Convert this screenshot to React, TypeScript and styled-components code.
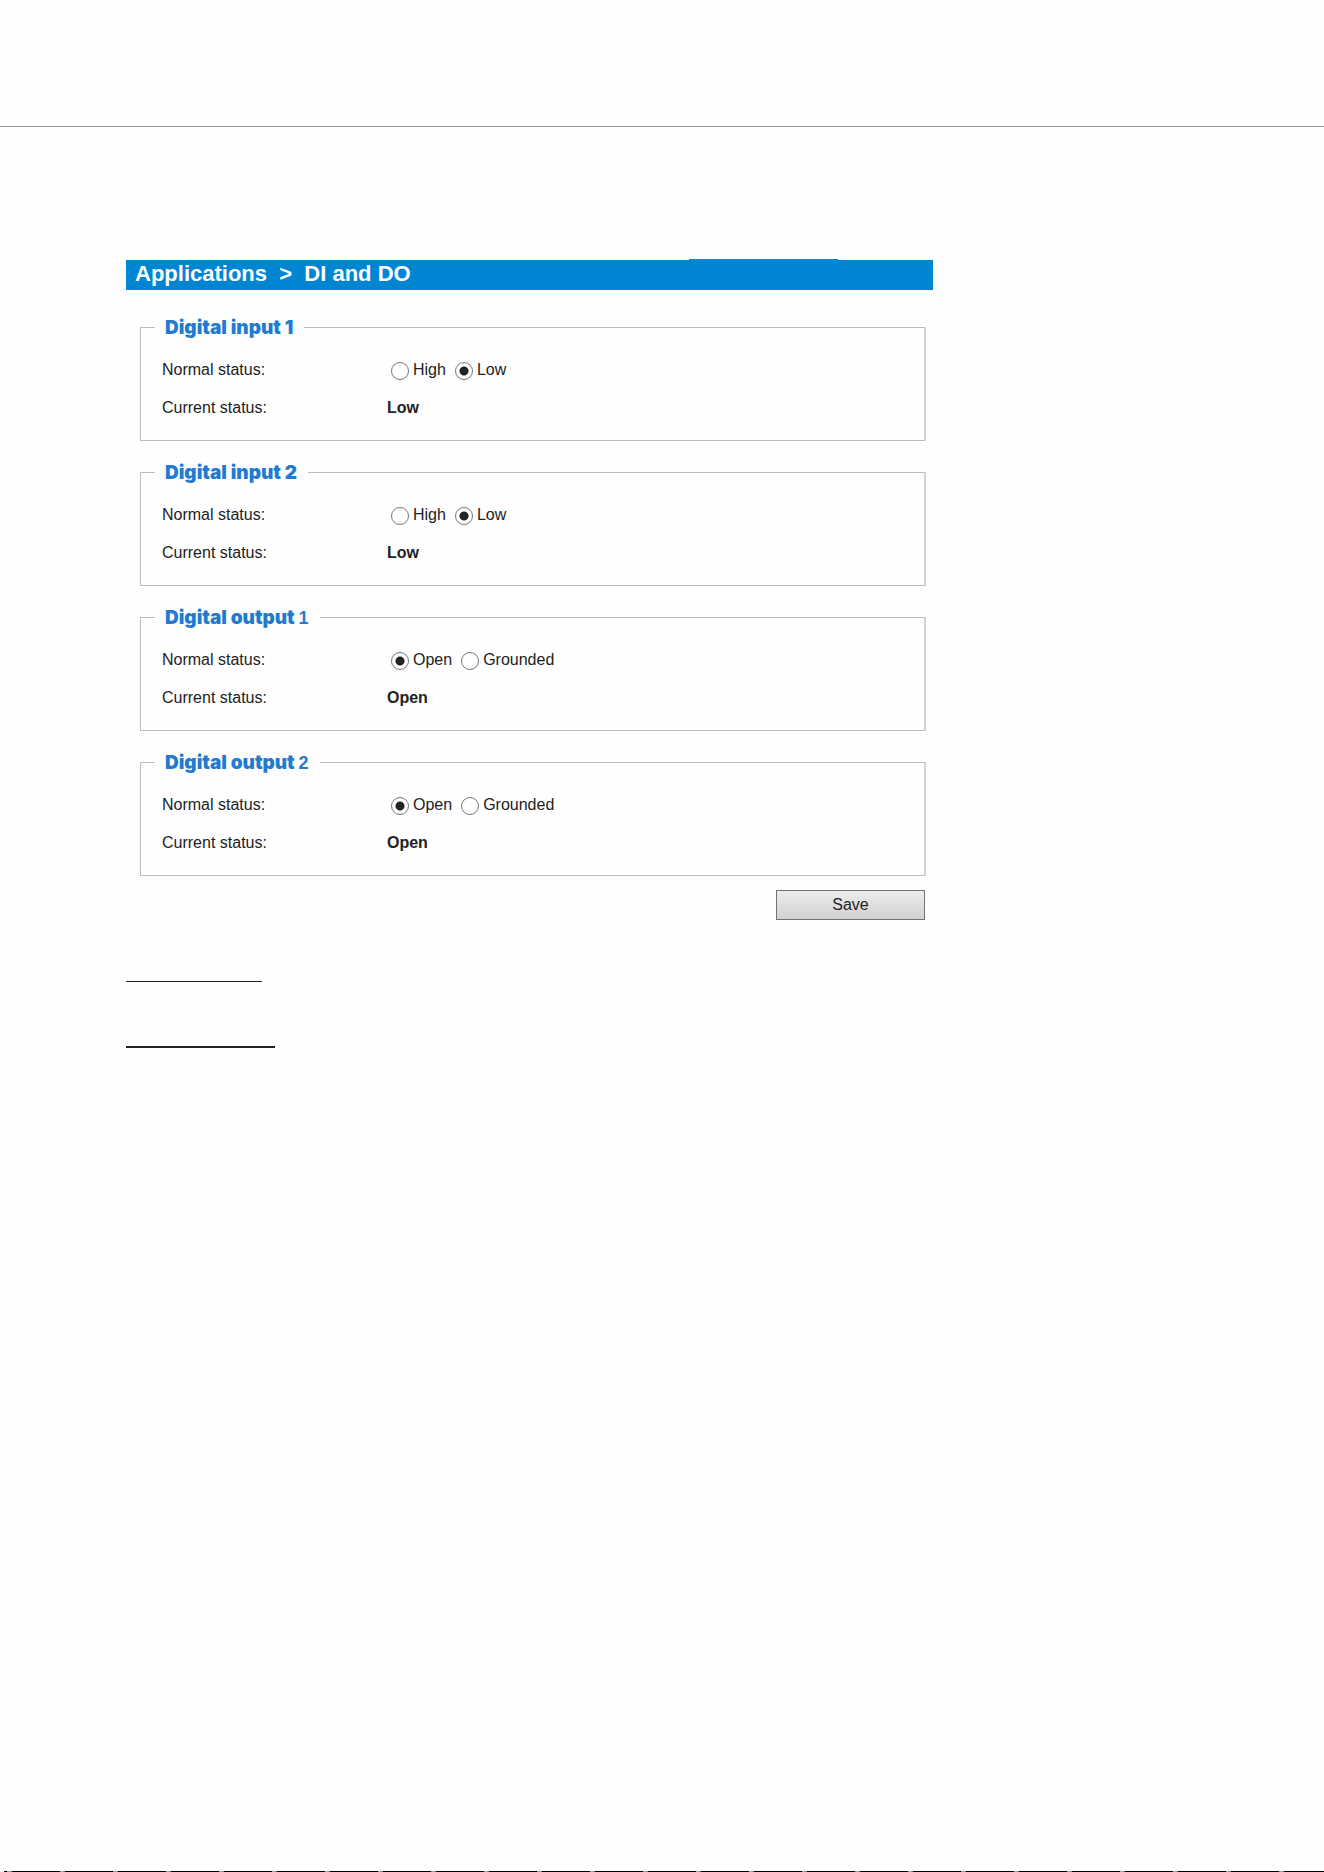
import React, { useState } from 'react';
import styled, { createGlobalStyle } from 'styled-components';

const GlobalStyle = createGlobalStyle`
  * {
    box-sizing: border-box;
  }

  body {
    margin: 0;
    background: #fefefe;
    color: #222;
    font: 16px/38px "Liberation Sans", Arial, sans-serif;
  }
`;

const Page = styled.div`
  display: flex;
  flex-direction: column;
  min-height: 100vh;
`;

const PageHeader = styled.header`
  height: 127px;
  border-bottom: 1px solid #999;
`;

const Content = styled.main`
  width: 100%;
  max-width: 933px;
  padding: 132px 0 0 126px;
`;

const Rule = styled.hr<{ $width: number; $weight?: number; $color?: string }>`
  width: ${props => props.$width}px;
  height: ${props => props.$weight || 1}px;
  margin: 0;
  border: 0;
  background: ${props => props.$color || '#222'};
`;

const TitleRules = styled.div`
  display: flex;
  justify-content: flex-end;
  padding-right: 95px;
`;

const TitleBar = styled.h1`
  height: 30px;
  margin: 0;
  padding-left: 9px;
  background: #0085d3;
  color: #fefefe;
  font-size: 22px;
  line-height: 28px;
  white-space: pre;
`;

const Form = styled.form`
  display: flex;
  flex-direction: column;
  gap: 20px;
  padding: 26px 7px 0 14px;
`;

const Group = styled.fieldset`
  min-width: 0;
  margin: 0;
  padding: 12px 21px 13px 14px;
  border: 1px solid #c1bdb6;
  border-right: 2px solid #d6d2cd;
`;

const GroupTitle = styled.legend`
  padding: 0 11px 0 10px;
  color: #1f7bd1;
  font: 900 19px/23px Inter, "Liberation Sans", sans-serif;
`;

const GroupNumber = styled.span<{ $light?: boolean }>`
  font-family: ${props => (props.$light ? '"Liberation Sans", Arial' : 'Inter')}, sans-serif;
  font-size: ${props => (props.$light ? 18 : 19)}px;
  line-height: 16px;
`;

const Row = styled.div`
  display: grid;
  grid-template-columns: 225px 1fr;
  height: 38px;
  padding-left: 7px;
`;

const Options = styled.div`
  display: flex;
  gap: 9px;
  padding-left: 4px;
`;

const Option = styled.label`
  display: flex;
  align-items: center;
  gap: 4px;
`;

const Radio = styled.input`
  appearance: none;
  width: 18px;
  height: 18px;
  margin: 2px 0 0;
  border: 1px solid #777;
  border-radius: 50%;
  background: #fff;

  &:checked {
    background: radial-gradient(circle, #222 4px, #fff 5px);
  }
`;

const SaveButton = styled.button`
  align-self: flex-end;
  width: 149px;
  height: 30px;
  margin: -6px 1px 0 0;
  padding: 0;
  border: 1px solid #707375;
  background: linear-gradient(#ececec, #d2d2d2);
  color: #222;
  font: inherit;
  line-height: 26px;
`;

const Notes = styled.div`
  display: flex;
  flex-direction: column;
  gap: 64px;
  padding-top: 61px;
`;

const PageFooter = styled.footer`
  height: 1px;
  margin-top: auto;
  margin-left: 4px;
  background: repeating-linear-gradient(90deg, #000 0 3px, #8aa 3px 6px, #a77 6px 8px, #000 8px 53px);
`;

interface StatusGroupProps {
  name: string;
  index: number;
  options: string[];
  initial: string;
  lightIndex?: boolean;
}

function StatusGroup({ name, index, options, initial, lightIndex }: StatusGroupProps) {
  const [normal, setNormal] = useState(initial);
  const field = `${name}-${index}`.replace(' ', '-');

  return (
    <Group>
      <GroupTitle>
        {name} <GroupNumber $light={lightIndex}>{index}</GroupNumber>
      </GroupTitle>
      <Row>
        <span id={field}>Normal status:</span>
        <Options role="radiogroup" aria-labelledby={field}>
          {options.map(option => (
            <Option key={option}>
              <Radio
                type="radio"
                name={field}
                value={option}
                checked={normal === option}
                onChange={() => setNormal(option)}
              />
              {option}
            </Option>
          ))}
        </Options>
      </Row>
      <Row>
        <span>Current status:</span>
        <strong>{initial}</strong>
      </Row>
    </Group>
  );
}

const inputLevels = ['High', 'Low'];
const outputLevels = ['Open', 'Grounded'];

export default function App() {
  return (
    <Page>
      <GlobalStyle />
      <PageHeader />
      <Content>
        <TitleRules>
          <Rule $width={149} $color="#0085d3" />
        </TitleRules>
        <TitleBar>{'Applications  >  DI and DO'}</TitleBar>
        <Form onSubmit={e => e.preventDefault()}>
          <StatusGroup name="Digital input" index={1} options={inputLevels} initial="Low" />
          <StatusGroup name="Digital input" index={2} options={inputLevels} initial="Low" />
          <StatusGroup name="Digital output" index={1} options={outputLevels} initial="Open" lightIndex />
          <StatusGroup name="Digital output" index={2} options={outputLevels} initial="Open" lightIndex />
          <SaveButton type="submit">Save</SaveButton>
        </Form>
        <Notes>
          <Rule $width={136} />
          <Rule $width={149} $weight={2} />
        </Notes>
      </Content>
      <PageFooter />
    </Page>
  );
}
